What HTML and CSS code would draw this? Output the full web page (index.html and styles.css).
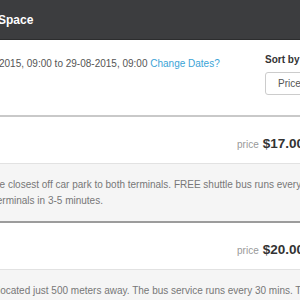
FILE: index.html
```html
<!DOCTYPE html>
<html>
<head>
<meta charset="utf-8">
<link rel="stylesheet" href="styles.css">
</head>
<body>
<div class="page">
  <header class="topbar"><span class="title">Space</span></header>
  <section class="filters">
    <div class="dates">2015, 09:00 to 29-08-2015, 09:00 <a class="change" href="#">Change Dates?</a></div>
    <div class="sort">
      <div class="sort-label">Sort by</div>
      <div class="select">Price</div>
    </div>
  </section>
  <section class="results">
    <article class="card">
      <div class="card-head"><span class="price-label">price</span><span class="price">$17.00</span></div>
      <div class="card-desc"><p class="desc-text shift-a">he closest off car park to both terminals. FREE shuttle bus runs every<br>terminals in 3-5 minutes.</p></div>
    </article>
    <article class="card">
      <div class="card-head"><span class="price-label">price</span><span class="price">$20.00</span></div>
      <div class="card-desc"><p class="desc-text shift-b">located just 500 meters away. The bus service runs every 30 mins. The shuttle</p></div>
    </article>
  </section>
</div>
</body>
</html>
```
FILE: styles.css
```css
html, body { margin: 0; padding: 0; }
body {
  width: 300px;
  height: 300px;
  overflow: hidden;
  font-family: "Liberation Sans", Arial, sans-serif;
  background: #fff;
}
.page { width: 300px; overflow: hidden; }
.topbar {
  height: 39px;
  background: #3c3d3f;
  border-bottom: 1px solid #2c2d2e;
  display: flex;
  align-items: center;
  overflow: hidden;
}
.title {
  color: #fff;
  font-weight: bold;
  font-size: 12px;
  margin-left: -2px;
  padding-top: 1px;
  white-space: nowrap;
}
.filters {
  height: 75px;
  display: flex;
  white-space: nowrap;
  overflow: hidden;
}
.dates {
  flex: none;
  font-size: 10px;
  color: #555;
  padding-top: 18px;
  width: 265px;
  margin-left: -1px;
}
.change { color: #3aa3d6; text-decoration: none; }
.sort { flex: none; padding-top: 14px; padding-left: 1px; }
.sort-label { font-size: 10px; font-weight: bold; color: #333; height: 18px; }
.select {
  width: 60px;
  height: 21px;
  border: 1px solid #ccc;
  border-radius: 3px;
  font-size: 10px;
  color: #555;
  line-height: 21px;
  padding-left: 12px;
}
.card {
  border-top: 2px solid #c9c9c9;
  overflow: hidden;
}
.card + .card { border-top-color: #9c9c9c; }
.card-head {
  height: 46px;
  background: #fff;
  display: flex;
  justify-content: flex-end;
  align-items: baseline;
  margin-right: -4px;
  line-height: 53px;
  white-space: nowrap;
}
.price-label { font-size: 10px; color: #999; margin-right: 4px; }
.price { font-size: 13.5px; font-weight: bold; color: #333; }
.card-desc {
  background: #f5f5f5;
  border-top: 1px solid #e2e2e2;
  height: 58px;
  box-sizing: border-box;
  padding-top: 13px;
}
.desc-text {
  margin: 0;
  font-size: 10px;
  line-height: 16px;
  color: #777;
  white-space: nowrap;
}
.shift-a { margin-left: -6px; }
.shift-b { margin-left: -2px; }
```
